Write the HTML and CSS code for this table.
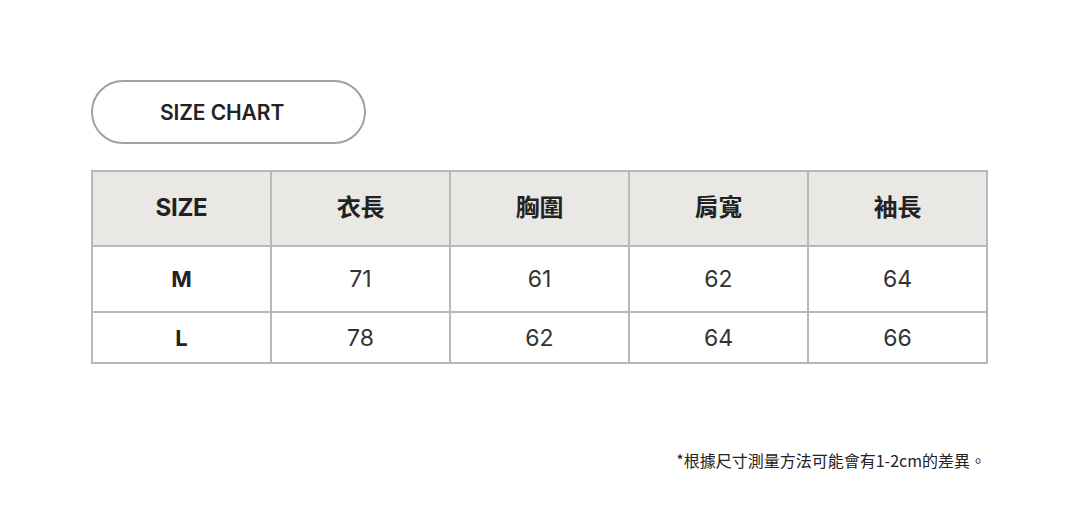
FILE: index.html
```html
<!DOCTYPE html>
<html lang="zh-Hant">
<head>
<meta charset="utf-8">
<link rel="stylesheet" href="styles.css">
</head>
<body>
<div class="page">
  <div class="pill">SIZE CHART</div>
  <table class="chart">
    <thead>
      <tr><th class="lat">SIZE</th><th>衣長</th><th>胸圍</th><th>肩寬</th><th>袖長</th></tr>
    </thead>
    <tbody>
      <tr class="r1"><th>M</th><td>71</td><td>61</td><td>62</td><td>64</td></tr>
      <tr class="r2"><th>L</th><td>78</td><td>62</td><td>64</td><td>66</td></tr>
    </tbody>
  </table>
  <p class="note">*根據尺寸測量方法可能會有1-2cm的差異。</p>
</div>
</body>
</html>
```
FILE: styles.css
```css
html, body { margin: 0; padding: 0; background: #fff; }
body { font-family: Inter, "Noto Sans CJK TC", sans-serif; color: #222; }
.page { padding: 80px 92px 0 91px; width: 1080px; box-sizing: border-box; }
.pill {
  width: 275px; height: 64px; box-sizing: border-box;
  border: 2px solid #a0a0a0; border-radius: 32px;
  display: flex; align-items: center; padding-left: 67px;
  font-size: 21px; font-weight: 600; letter-spacing: -0.1px; color: #222;
}
.chart {
  margin-top: 26px; width: 897px; border-collapse: collapse;
  table-layout: fixed;
}
.chart th, .chart td {
  border: 2px solid #b8b8b8; text-align: center; padding: 0;
}
.chart thead th {
  background: #e9e8e5; height: 67px; font-size: 24px; font-weight: 700;
  line-height: 1; padding-bottom: 6px; letter-spacing: -0.3px;
  font-family: "Noto Sans CJK TC", sans-serif;
}
.chart thead th.lat {
  font-family: Inter, sans-serif; font-size: 24px;
  height: 71px; padding-bottom: 2px;
}
.chart tbody th { font-size: 22px; font-weight: 700; }
.chart td { font-size: 23px; font-weight: 400; color: #333; }
.chart .r1 th, .chart .r1 td { height: 64px; }
.chart .r2 th, .chart .r2 td { height: 49px; }
.note {
  margin: 84px 2px 0 0; text-align: right;
  font-family: "Noto Sans CJK TC", sans-serif; font-size: 16px; color: #222;
}
```
